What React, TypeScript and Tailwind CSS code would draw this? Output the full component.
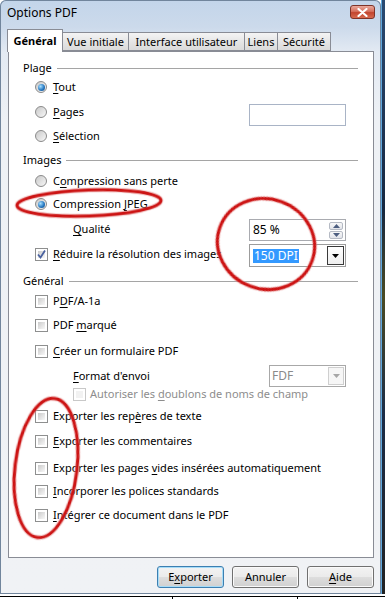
import React from "react";

function Mn({ children }: { children: React.ReactNode }) {
  return <span className="underline decoration-1 underline-offset-[2px]">{children}</span>;
}

function Radio({ checked = false }: { checked?: boolean }) {
  return (
    <span className="w-[12px] h-[12px] shrink-0 rounded-full border border-[#8a8a8a] bg-[linear-gradient(135deg,#c9c9c9,#f7f7f7)] flex items-center justify-center">
      {checked && (
        <span className="w-[7px] h-[7px] rounded-full bg-[radial-gradient(circle_at_35%_35%,#a8e0ff,#2a7cc4_55%,#0e3f78)]" />
      )}
    </span>
  );
}

function Check({ checked = false, disabled = false }: { checked?: boolean; disabled?: boolean }) {
  return (
    <span
      className={`relative w-[13px] h-[13px] shrink-0 border bg-white p-[2px] ${
        disabled ? "border-[#c8c8c8]" : "border-[#8e8f8f]"
      }`}
    >
      <span
        className={`block w-full h-full ${
          disabled ? "bg-[#f2f2f2]" : "bg-[linear-gradient(135deg,#cbcbcb,#f8f8f8)]"
        }`}
      />
      {checked && (
        <svg className="absolute left-0 top-0" width="11" height="11" viewBox="0 0 11 11">
          <path d="M2 5.5 L4.5 8.5 L9 1.5" fill="none" stroke="#4a62a0" strokeWidth="1.8" />
        </svg>
      )}
    </span>
  );
}

function Group({ label, h }: { label: string; h: string }) {
  return (
    <div className={h}>
      <div className="h-[20px] flex items-center pl-[14px] pr-[15px] gap-[5px]">
        <span className="leading-[16px]">{label}</span>
        <div className="flex-1 h-px bg-[#a5a5a5]" />
      </div>
    </div>
  );
}

function Tab({ label, w, active = false }: { label: string; w: string; active?: boolean }) {
  if (active) {
    return (
      <div
        className={`${w} h-[23px] -mb-px relative z-10 bg-white border border-b-0 border-[#898c95] flex items-center justify-center font-bold`}
      >
        <span className="leading-[16px]">{label}</span>
      </div>
    );
  }
  return (
    <div
      className={`${w} h-[19px] -ml-px border border-[#898c95] bg-[linear-gradient(to_bottom,#f4f4f4,#e6e6e6_50%,#dadada)] flex items-center justify-center whitespace-nowrap`}
    >
      <span className="leading-[16px]">{label}</span>
    </div>
  );
}

function Button({ children, def = false }: { children: React.ReactNode; def?: boolean }) {
  return (
    <div
      className={`w-[67px] h-[22px] rounded-[3px] border flex items-center justify-center bg-[linear-gradient(to_bottom,#f3f3f3_0%,#ebebeb_48%,#dddddd_52%,#d0d0d0_100%)] ${
        def
          ? "border-[#3c7fb1] shadow-[inset_0_0_0_1px_#a6dcf8]"
          : "border-[#707070] shadow-[inset_0_0_0_1px_#fafafa]"
      }`}
    >
      <span className="leading-[16px]">{children}</span>
    </div>
  );
}

function Arrow({ dir, color }: { dir: "up" | "down"; color: string }) {
  return (
    <svg width="7" height="4" viewBox="0 0 7 4">
      <path d={dir === "up" ? "M0 4 L3.5 0 L7 4 Z" : "M0 0 L7 0 L3.5 4 Z"} fill={color} />
    </svg>
  );
}

export default function App() {
  return (
    <div className="w-[385px] h-[599px] relative overflow-hidden bg-white text-[11px] text-black leading-none font-['Noto_Sans',sans-serif]">
      <div className="flex h-[594px]">
        <div className="w-[381px] h-[594px] rounded-t-[6px] shadow-[inset_0_0_0_1px_#71859c] bg-[linear-gradient(to_bottom,#c3d5ea_0px,#ccdaeb_27px,#e3eaf3_52px,#eef1f5_120px,#f0f2f5_100%)] flex flex-col">
          {/* title bar */}
          <div className="h-[27px] flex items-start shrink-0">
            <span className="mt-[5px] ml-[7px] leading-[16px] text-[12px]">Options PDF</span>
            <div className="ml-auto mr-[6px] mt-[5px] w-[25px] h-[14px] rounded-[3px] border border-[#7e3328] bg-[linear-gradient(to_bottom,#e9a99c,#d6705d_45%,#c2452f_55%,#d66a4f)] flex items-center justify-center">
              <svg width="11" height="9" viewBox="0 0 11 9">
                <path d="M1.5 1 L9.5 8 M9.5 1 L1.5 8" stroke="#ffffff" strokeWidth="2.2" strokeLinecap="round" />
              </svg>
            </div>
          </div>

          {/* tabs */}
          <div className="h-[23px] mt-px pl-[7px] flex items-end shrink-0">
            <Tab label="Général" w="w-[56px]" active />
            <Tab label="Vue initiale" w="w-[67px]" />
            <Tab label="Interface utilisateur" w="w-[117px]" />
            <Tab label="Liens" w="w-[34px]" />
            <Tab label="Sécurité" w="w-[54px]" />
          </div>

          {/* panel */}
          <div className="ml-[8px] w-[366px] h-[507px] border border-[#898c95] bg-white pt-[6px] shrink-0">
            <Group label="Plage" h="h-[19px]" />
            <div className="h-[25px]">
              <div className="h-[20px] flex items-center pl-[26px] gap-[6px]">
                <Radio checked />
                <span className="leading-[16px]"><Mn>T</Mn>out</span>
              </div>
            </div>
            <div className="h-[24px]">
              <div className="h-[20px] flex items-center pl-[26px] pr-[27px] gap-[6px]">
                <Radio />
                <span className="leading-[16px]"><Mn>P</Mn>ages</span>
                <div className="ml-auto mt-[5px] w-[97px] h-[22px] border border-[#a9b4c6] bg-white" />
              </div>
            </div>
            <div className="h-[24px]">
              <div className="h-[20px] flex items-center pl-[26px] gap-[6px]">
                <Radio />
                <span className="leading-[16px]"><Mn>S</Mn>élection</span>
              </div>
            </div>
            <Group label="Images" h="h-[21px]" />
            <div className="h-[23px]">
              <div className="h-[20px] flex items-center pl-[26px] gap-[6px]">
                <Radio />
                <span className="leading-[16px]">C<Mn>o</Mn>mpression sans perte</span>
              </div>
            </div>
            <div className="h-[25px]">
              <div className="h-[20px] flex items-center pl-[26px] gap-[6px]">
                <Radio checked />
                <span className="leading-[16px]">Compression <Mn>J</Mn>PEG</span>
              </div>
            </div>
            <div className="h-[25px]">
              <div className="h-[20px] flex items-center pl-[64px] pr-[27px]">
                <span className="leading-[16px]"><Mn>Q</Mn>ualité</span>
                <div className="ml-auto mt-[2px] w-[97px] h-[22px] border border-[#a9abb0] bg-white flex items-center">
                  <span className="pl-[3px] flex-1 leading-[16px] text-[12px]">85 %</span>
                  <div className="w-[14px] h-[17px] mr-[2px] flex flex-col gap-px">
                    <div className="flex-1 rounded-[2px] border border-[#b5bac4] bg-[linear-gradient(to_bottom,#f8f8f8,#e2e4ea)] flex items-center justify-center">
                      <Arrow dir="up" color="#4d5e80" />
                    </div>
                    <div className="flex-1 rounded-[2px] border border-[#b5bac4] bg-[linear-gradient(to_bottom,#f8f8f8,#e2e4ea)] flex items-center justify-center">
                      <Arrow dir="down" color="#4d5e80" />
                    </div>
                  </div>
                </div>
              </div>
            </div>
            <div className="h-[27px]">
              <div className="h-[20px] flex items-center pl-[26px] pr-[27px] gap-[5px]">
                <Check checked />
                <span className="leading-[16px] whitespace-nowrap"><Mn>R</Mn>éduire la résolution des images</span>
                <div className="ml-auto mt-[3px] w-[97px] h-[23px] border border-[#9c9c9c] bg-white flex items-center">
                  <span className="ml-[3px] px-px bg-[#3399ff] text-white text-[12px] leading-[14px] h-[14px]">150 DPI</span>
                  <div className="ml-auto mr-px w-[17px] h-[19px] border border-[#3a3a3a] bg-[linear-gradient(to_bottom,#ffffff,#eeeeee)] flex items-center justify-center">
                    <Arrow dir="down" color="#000000" />
                  </div>
                </div>
              </div>
            </div>
            <Group label="Général" h="h-[20px]" />
            <div className="h-[24px]">
              <div className="h-[20px] flex items-center pl-[26px] gap-[5px]">
                <Check />
                <span className="leading-[16px]">P<Mn>D</Mn>F/A-1a</span>
              </div>
            </div>
            <div className="h-[26px]">
              <div className="h-[20px] flex items-center pl-[26px] gap-[5px]">
                <Check />
                <span className="leading-[16px]">PDF <Mn>m</Mn>arqué</span>
              </div>
            </div>
            <div className="h-[25px]">
              <div className="h-[20px] flex items-center pl-[26px] gap-[5px]">
                <Check />
                <span className="leading-[16px]"><Mn>C</Mn>réer un formulaire PDF</span>
              </div>
            </div>
            <div className="h-[18px]">
              <div className="h-[20px] flex items-center pl-[64px] pr-[27px]">
                <span className="leading-[16px]"><Mn>F</Mn>ormat d'envoi</span>
                <div className="ml-auto w-[77px] h-[22px] border border-[#a8a8a8] bg-white flex items-center">
                  <span className="ml-[2px] text-[#8a8a8a] text-[12px] leading-[16px]">FDF</span>
                  <div className="ml-auto mr-px w-[16px] h-[18px] border border-[#cfcfcf] bg-[#f6f6f6] flex items-center justify-center">
                    <Arrow dir="down" color="#a6a6a6" />
                  </div>
                </div>
              </div>
            </div>
            <div className="h-[22px]">
              <div className="h-[20px] flex items-center pl-[64px] gap-[4px] text-[#8d8d8d]">
                <Check disabled />
                <span className="leading-[16px]">Autoriser les <Mn>d</Mn>oublons de noms de champ</span>
              </div>
            </div>
            <div className="h-[25px]">
              <div className="h-[20px] flex items-center pl-[26px] gap-[5px]">
                <Check />
                <span className="leading-[16px]">Exporter les rep<Mn>è</Mn>res de texte</span>
              </div>
            </div>
            <div className="h-[27px]">
              <div className="h-[20px] flex items-center pl-[26px] gap-[5px]">
                <Check />
                <span className="leading-[16px]"><Mn>E</Mn>xporter les commentaires</span>
              </div>
            </div>
            <div className="h-[23px]">
              <div className="h-[20px] flex items-center pl-[26px] gap-[5px]">
                <Check />
                <span className="leading-[16px] whitespace-nowrap">Exporter les pages <Mn>v</Mn>ides insérées automatiquement</span>
              </div>
            </div>
            <div className="h-[24px]">
              <div className="h-[20px] flex items-center pl-[26px] gap-[5px]">
                <Check />
                <span className="leading-[16px]"><Mn>I</Mn>ncorporer les polices standards</span>
              </div>
            </div>
            <div className="h-[20px]">
              <div className="h-[20px] flex items-center pl-[26px] gap-[5px]">
                <Check />
                <span className="leading-[16px]"><Mn>I</Mn>ntégrer ce document dans le PDF</span>
              </div>
            </div>
          </div>

          {/* buttons */}
          <div className="mt-[8px] w-[374px] flex justify-end gap-[8px]">
            <Button def>E<Mn>x</Mn>porter</Button>
            <Button>Annuler</Button>
            <Button><Mn>A</Mn>ide</Button>
          </div>
        </div>
        <div className="w-[4px] h-full border-l border-[#5fa8de] bg-[linear-gradient(to_bottom,#2a4a72,#16263f_35%,#4a4a22_50%,#1b2b46_70%,#222)]" />
      </div>

      {/* desktop strip below */}
      <div className="h-[5px] flex flex-col">
        <div className="h-[2px]" />
        <div className="h-px bg-black" />
        <div className="flex-1 flex">
          <div className="w-[172px]" />
          <div className="w-px bg-black" />
          <div className="w-[124px]" />
          <div className="w-px bg-black" />
        </div>
      </div>

      {/* red hand-drawn annotations */}
      <svg className="absolute inset-0 pointer-events-none" width="385" height="599" viewBox="0 0 385 599">
        <g fill="none" stroke="#e79a9a" strokeWidth="5" opacity="0.45">
          <ellipse cx="89" cy="203" rx="72" ry="13" transform="rotate(-2 89 203)" />
          <ellipse cx="266" cy="244" rx="49" ry="45" transform="rotate(20 266 244)" />
          <ellipse cx="46" cy="468" rx="31" ry="70" transform="rotate(7 46 468)" />
        </g>
        <g fill="none" stroke="#cc1414" strokeWidth="3">
          <ellipse cx="89" cy="203" rx="72" ry="13" transform="rotate(-2 89 203)" />
          <ellipse cx="266" cy="244" rx="49" ry="45" transform="rotate(20 266 244)" />
          <ellipse cx="46" cy="468" rx="31" ry="70" transform="rotate(7 46 468)" />
        </g>
      </svg>
    </div>
  );
}
